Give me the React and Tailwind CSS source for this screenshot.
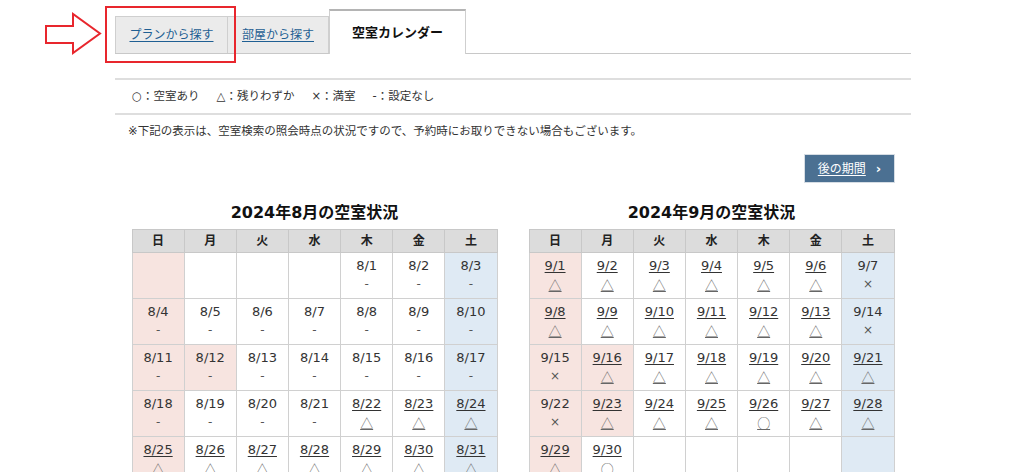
import React from 'react';

const FONT = { fontFamily: '"DejaVu Sans", "Noto Sans CJK JP", sans-serif' };
const CJK = { fontFamily: '"Noto Sans CJK JP", sans-serif' };
const WEEK = ['日', '月', '火', '水', '木', '金', '土'];

function buildMonth(month, startDow, days, statusOf, holidays) {
  const cells = [];
  for (let i = 0; i < startDow; i++) cells.push(null);
  for (let d = 1; d <= days; d++) {
    const s = statusOf(d);
    cells.push({ label: `${month}/${d}`, mark: s, link: s === '△' || s === '○', holiday: holidays.includes(d) });
  }
  while (cells.length % 7) cells.push(null);
  const rows = [];
  for (let i = 0; i < cells.length; i += 7) rows.push(cells.slice(i, i + 7));
  return rows;
}

const augRows = buildMonth(8, 4, 31, (d) => (d >= 22 ? '△' : '-'), [12]);
const sepRows = buildMonth(
  9,
  0,
  30,
  (d) => {
    if ([7, 14, 15, 22].includes(d)) return '×';
    if ([26, 30].includes(d)) return '○';
    return '△';
  },
  [16, 23]
);

function Calendar({ title, rows }) {
  return (
    <div className="w-[366px]">
      <h2 className="text-center text-[16px] font-bold text-[#111] leading-[20px] mb-[6px]">{title}</h2>
      <table className="w-[366px] table-fixed border-collapse">
        <thead>
          <tr>
            {WEEK.map((w) => (
              <th key={w} className="h-[23px] border border-[#c8c8c8] bg-[#dcdcdc] text-[12px] font-bold text-[#222] p-0">
                {w}
              </th>
            ))}
          </tr>
        </thead>
        <tbody>
          {rows.map((row, ri) => (
            <tr key={ri}>
              {row.map((c, ci) => {
                let bg = 'bg-white';
                if (ci === 0 || (c && c.holiday)) bg = 'bg-[#f7e4e0]';
                if (ci === 6) bg = 'bg-[#dfeaf4]';
                return (
                  <td key={ci} className={`h-[46px] border border-[#d0d0d0] p-0 align-top text-center ${bg}`}>
                    {c && (
                      <div className="pt-[3px] text-[13px] leading-[19px] text-[#333]">
                        <div className={c.link ? 'underline underline-offset-2' : ''}>{c.label}</div>
                        {c.link ? (
                          <div className="underline underline-offset-1 text-[#666] text-[13px]" style={CJK}>
                            {c.mark}
                          </div>
                        ) : (
                          <div className="text-[#555] text-[12px]">{c.mark}</div>
                        )}
                      </div>
                    )}
                  </td>
                );
              })}
            </tr>
          ))}
        </tbody>
      </table>
    </div>
  );
}

export default function App() {
  return (
    <div className="relative w-[1024px] h-[472px] overflow-hidden bg-white text-[#333]" style={FONT}>
      {/* annotation arrow */}
      <svg className="absolute left-[44px] top-[12px]" width="60" height="44" viewBox="0 0 60 44">
        <path d="M2 14 H29 V2 L56 21.5 L29 41 V31 H2 Z" fill="white" stroke="#e8262d" strokeWidth="2" strokeLinejoin="miter" />
      </svg>
      {/* annotation box */}
      <div className="absolute left-[105px] top-[6px] w-[131px] h-[57px] border-2 border-[#e8262d] z-10" />

      <div className="ml-[115px] w-[796px] pt-[9px]">
        {/* tabs */}
        <div className="flex items-end h-[45px] border-b border-[#c8c8c8]">
          <div className="w-[113px] h-[37px] bg-[#ebebeb] border border-b-0 border-[#cfcfcf] flex items-center justify-center">
            <span className="text-[12px] text-[#1f5f93] underline underline-offset-2">プランから探す</span>
          </div>
          <div className="w-[101px] h-[37px] bg-[#ebebeb] border border-l-0 border-b-0 border-[#cfcfcf] flex items-center justify-center">
            <span className="text-[12px] text-[#1f5f93] underline underline-offset-2">部屋から探す</span>
          </div>
          <div className="w-[137px] h-[45px] -mb-px bg-white border-t-2 border-t-[#b4b4b4] border-x border-x-[#cfcfcf] flex items-center justify-center">
            <span className="text-[13px] font-bold text-[#111]">空室カレンダー</span>
          </div>
        </div>

        {/* legend */}
        <div className="mt-[24px] border-t-2 border-b-2 border-[#dedede] h-[37px] flex items-center pl-[17px] gap-[17px] text-[11.5px] text-[#333]">
          <span>○：空室あり</span>
          <span>△：残りわずか</span>
          <span>×：満室</span>
          <span>-：設定なし</span>
        </div>

        <p className="mt-[8px] pl-[13px] text-[11.5px] leading-[16px] text-[#333]">
          ※下記の表示は、空室検索の照会時点の状況ですので、予約時にお取りできない場合もございます。
        </p>

        <div className="flex justify-end pr-[16px] mt-[15px]">
          <div className="w-[91px] h-[29px] bg-[#4b7092] border border-[#d6dde4] flex items-center justify-center gap-[10px] text-white text-[12px]">
            <span className="underline underline-offset-2">後の期間</span>
            <span className="font-bold text-[13px]">›</span>
          </div>
        </div>

        <div className="flex justify-center gap-[31px] mt-[20px]">
          <Calendar title="2024年8月の空室状況" rows={augRows} />
          <Calendar title="2024年9月の空室状況" rows={sepRows} />
        </div>
      </div>
    </div>
  );
}
